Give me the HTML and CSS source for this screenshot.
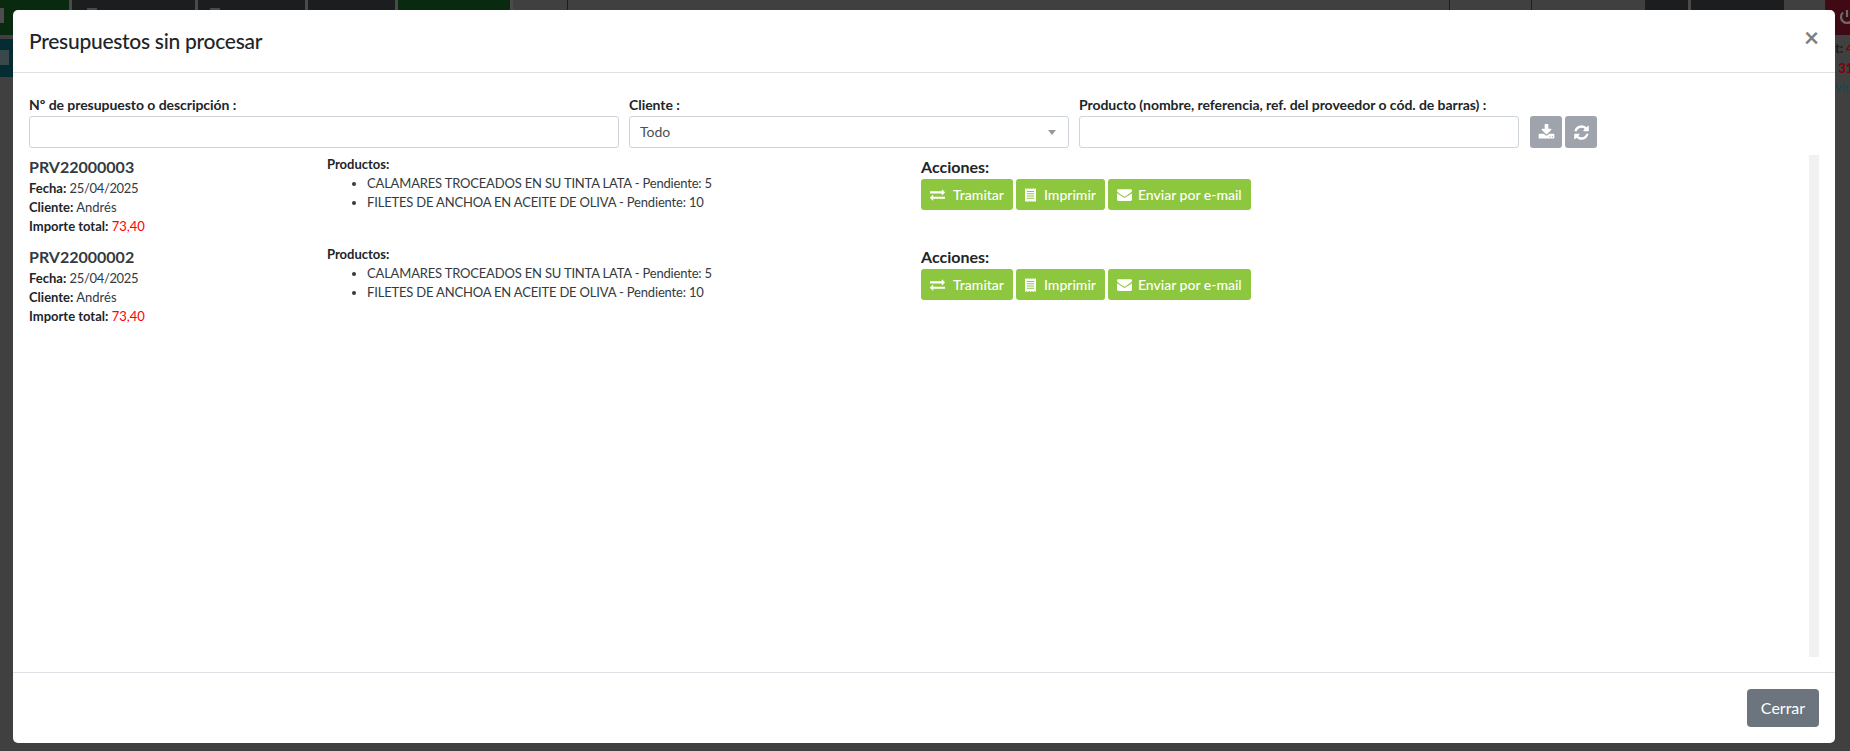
FILE: index.html
```html
<!DOCTYPE html>
<html lang="es">
<head>
<meta charset="utf-8">
<title>Presupuestos sin procesar</title>
<link rel="stylesheet" href="styles.css">
</head>
<body>
<svg class="sprite" xmlns="http://www.w3.org/2000/svg" aria-hidden="true">
  <symbol id="i-exchange" viewBox="0 0 1792 1792"><path d="M1792 1184v192q0 13-9.500 22.500t-22.500 9.500h-1376v192q0 13-9.500 22.500t-22.500 9.500q-12 0-24-10l-319-320q-9-9-9-22 0-14 9-23l320-320q9-9 23-9 13 0 22.500 9.500t9.500 22.500v192h1376q13 0 22.500 9.500t9.500 22.500zm0-544q0 14-9 23l-320 320q-9 9-23 9-13 0-22.500-9.500t-9.500-22.500v-192h-1376q-13 0-22.500-9.500t-9.500-22.500v-192q0-13 9.500-22.500t22.500-9.500h1376v-192q0-14 9-23t23-9q12 0 24 10l319 319q9 9 9 23z" fill="currentColor"/></symbol>
  <symbol id="i-receipt" viewBox="0 0 12 15"><path d="M0 0l1.500 1L3 0l1.500 1L6 0l1.500 1L9 0l1.500 1L12 0v15l-1.500-1L9 15l-1.500-1L6 15l-1.500-1L3 15l-1.500-1L0 15zM2 3.200v1.100h8V3.200zM2 5.600v1.100h8V5.600zM2 8v1.100h8V8zM2 10.400v1.100h8v-1.100z" fill="currentColor" fill-rule="evenodd"/></symbol>
  <symbol id="i-mail" viewBox="0 0 1792 1792"><path d="M1792 710v794q0 66-47 113t-113 47h-1472q-66 0-113-47t-47-113v-794q44 49 101 87 362 246 497 345 57 42 92.500 65.500t94.500 48 110 24.500h2q51 0 110-24.500t94.500-48 92.500-65.500q170-123 498-345 57-39 100-87zm0-294q0 79-49 151t-122 123q-376 261-468 325-10 7-42.500 30.500t-54 38-52 32.500-57.500 27-50 9h-2q-23 0-50-9t-57.500-27-52-32.500-54-38-42.500-30.500q-91-64-262-182.500t-205-142.500q-62-42-117-115.500t-55-136.500q0-78 41.500-130t118.500-52h1472q65 0 112.500 47t47.500 113z" fill="currentColor"/></symbol>
  <symbol id="i-download" viewBox="0 0 1792 1792"><path d="M1344 1344q0-26-19-45t-45-19-45 19-19 45 19 45 45 19 45-19 19-45zm256 0q0-26-19-45t-45-19-45 19-19 45 19 45 45 19 45-19 19-45zm128-224v320q0 40-28 68t-68 28h-1472q-40 0-68-28t-28-68v-320q0-40 28-68t68-28h465l135 136q58 56 136 56t136-56l136-136h464q40 0 68 28t28 68zm-325-569q17 41-14 70l-448 448q-18 19-45 19t-45-19l-448-448q-31-29-14-70 17-39 59-39h256v-448q0-26 19-45t45-19h256q26 0 45 19t19 45v448h256q42 0 59 39z" fill="currentColor"/></symbol>
  <symbol id="i-refresh" viewBox="0 0 1792 1792"><path d="M1639 1056q0 5-1 7-64 268-268 434.500t-478 166.500q-146 0-282.500-55t-243.500-157l-129 129q-19 19-45 19t-45-19-19-45v-448q0-26 19-45t45-19h448q26 0 45 19t19 45-19 45l-137 137q71 66 161 102t187 36q134 0 250-65t186-179q11-17 53-117 8-23 30-23h192q13 0 22.500 9.500t9.500 22.500zm25-800v448q0 26-19 45t-45 19h-448q-26 0-45-19t-19-45 19-45l138-138q-148-137-349-137-134 0-250 65t-186 179q-11 17-53 117-8 23-30 23h-199q-13 0-22.500-9.500t-9.500-22.500v-7q65-268 270-434.500t480-166.500q146 0 284 55.500t245 156.500l130-129q19-19 45-19t45 19 19 45z" fill="currentColor"/></symbol>
  <symbol id="i-power" viewBox="0 0 16 16"><path d="M8 1v7M4 3.500a6 6 0 1 0 8 0" fill="none" stroke="currentColor" stroke-width="2.200"/></symbol>
</svg>
<div class="behind">
  <div class="topbar">
    <div class="seg seg-green w-70"><i class="mark-left"></i></div>
    <div class="seg seg-dark w-123"><i class="mark mark-a"></i></div>
    <div class="seg seg-dark w-107"><i class="mark mark-b"></i></div>
    <div class="seg seg-dark w-87"></div>
    <div class="seg seg-green w-112"></div>
    <div class="seg seg-gray w-54 line"></div>
    <div class="seg seg-gray w-882 line"></div>
    <div class="seg seg-gray w-80 line"></div>
    <div class="seg seg-gray w-113 line"></div>
    <div class="seg seg-dark w-42"></div>
    <div class="seg seg-dark w-93"></div>
    <div class="seg seg-gray w-flex line"></div>
    <div class="seg seg-red w-23"><svg class="power"><use href="#i-power"/></svg></div>
  </div>
  <div class="under">
    <div class="teal"><i class="mark-teal"></i></div>
    <div class="side">
      <div class="side-line">t: <span class="side-red">4</span></div>
      <div class="side-line side-red">&nbsp;31</div>
      <div class="side-line side-teal">vid</div>
    </div>
  </div>
</div>

<div class="modal">
  <header class="modal-head">
    <h1 class="modal-title">Presupuestos sin procesar</h1>
    <button class="close" type="button" aria-label="Cerrar">×</button>
  </header>
  <div class="modal-body">
    <form class="filters">
      <div class="field field-a">
        <label class="label" for="q">Nº de presupuesto o descripción :</label>
        <input class="control" id="q" type="text">
      </div>
      <div class="field field-b">
        <label class="label" for="c">Cliente :</label>
        <div class="control select" id="c">Todo<span class="caret"></span></div>
      </div>
      <div class="field field-b">
        <label class="label" for="p">Producto (nombre, referencia, ref. del proveedor o cód. de barras) :</label>
        <input class="control" id="p" type="text">
      </div>
      <div class="tools">
        <button class="tool" type="button"><svg class="tool-icon"><use href="#i-download"/></svg></button>
        <button class="tool" type="button"><svg class="tool-icon"><use href="#i-refresh"/></svg></button>
      </div>
    </form>
    <div class="results">
      <div class="list">
        <article class="row">
          <div class="col-info">
            <h2 class="code">PRV22000003</h2>
            <div class="meta"><b>Fecha:</b> <span class="date">25/04/2025</span></div>
            <div class="meta"><b>Cliente:</b> Andrés</div>
            <div class="meta"><b>Importe total:</b> <span class="amount">73,40</span></div>
          </div>
          <div class="col-products">
            <div class="prod-title">Productos:</div>
            <ul class="prod-list">
              <li>CALAMARES TROCEADOS EN SU TINTA LATA - Pendiente: 5</li>
              <li>FILETES DE ANCHOA EN ACEITE DE OLIVA - Pendiente: 10</li>
            </ul>
          </div>
          <div class="col-actions">
            <h3 class="act-title">Acciones:</h3>
            <div class="act-btns">
              <button class="btn" type="button"><svg class="ic ic-ex"><use href="#i-exchange"/></svg>Tramitar</button>
              <button class="btn" type="button"><svg class="ic ic-re"><use href="#i-receipt"/></svg>Imprimir</button>
              <button class="btn" type="button"><svg class="ic ic-ma"><use href="#i-mail"/></svg>Enviar por e-mail</button>
            </div>
          </div>
        </article>
        <article class="row">
          <div class="col-info">
            <h2 class="code">PRV22000002</h2>
            <div class="meta"><b>Fecha:</b> <span class="date">25/04/2025</span></div>
            <div class="meta"><b>Cliente:</b> Andrés</div>
            <div class="meta"><b>Importe total:</b> <span class="amount">73,40</span></div>
          </div>
          <div class="col-products">
            <div class="prod-title">Productos:</div>
            <ul class="prod-list">
              <li>CALAMARES TROCEADOS EN SU TINTA LATA - Pendiente: 5</li>
              <li>FILETES DE ANCHOA EN ACEITE DE OLIVA - Pendiente: 10</li>
            </ul>
          </div>
          <div class="col-actions">
            <h3 class="act-title">Acciones:</h3>
            <div class="act-btns">
              <button class="btn" type="button"><svg class="ic ic-ex"><use href="#i-exchange"/></svg>Tramitar</button>
              <button class="btn" type="button"><svg class="ic ic-re"><use href="#i-receipt"/></svg>Imprimir</button>
              <button class="btn" type="button"><svg class="ic ic-ma"><use href="#i-mail"/></svg>Enviar por e-mail</button>
            </div>
          </div>
        </article>
      </div>
      <div class="scrolltrack"></div>
    </div>
  </div>
  <footer class="modal-foot">
    <button class="btn-close" type="button">Cerrar</button>
  </footer>
</div>
</body>
</html>
```
FILE: styles.css
```css
* { box-sizing: border-box; }
html, body { margin: 0; height: 751px; overflow: hidden; }
body {
  position: relative;
  background: #404040;
  font-family: Lato, "Open Sans", sans-serif;
  color: #212529;
  font-size: 13px;
  line-height: 19px;
}
.sprite { display: none; }

/* page dimmed behind the dialog */
.behind { height: 751px; overflow: hidden; }
.topbar { display: flex; height: 35px; }
.seg { height: 35px; position: relative; border-right: 3px solid #4a4a4a; flex: none; }
.seg.line { border-right: 1px solid #1c1d1f; }
.seg-green { background: #0a2a10; }
.seg-dark { background: #1c1d1f; }
.seg-gray { background: #404040; }
.seg-red { background: #3f0a14; border-right: 0; color: #6b6b6b; }
.w-70 { width: 72px; }
.w-123 { width: 126px; }
.w-107 { width: 110px; }
.w-87 { width: 90px; }
.w-112 { width: 115px; }
.w-54 { width: 55px; }
.w-882 { width: 882px; }
.w-80 { width: 82px; }
.w-113 { width: 114px; }
.w-42 { width: 45px; }
.w-93 { width: 93px; border-right: 0; }
.w-flex { width: 42px; }
.w-23 { flex: 1; }
.mark { position: absolute; top: 8px; width: 10px; height: 6px; background: #4a4a4a; }
.mark-a { left: 15px; }
.mark-b { left: 12px; }
.mark-left { position: absolute; left: 0; top: 8px; width: 4px; height: 15px; background: #4d4d4d; }
.power { position: absolute; left: 13px; top: 9px; width: 16px; height: 16px; }
.under { display: flex; justify-content: space-between; padding-top: 4px; }
.teal { width: 13px; height: 38px; background: #032c33; position: relative; }
.mark-teal { position: absolute; left: 0; top: 11px; width: 9px; height: 15px; background: #3a484c; }
.side { width: 15px; font-size: 13px; font-weight: 700; line-height: 19.500px; white-space: nowrap; overflow: hidden; color: #1c1d1f; }
.side-line { height: 19.500px; }
.side-red { color: #800000; }
.side-teal { color: #0f4a55; font-weight: 400; }

/* dialog */
.modal {
  position: absolute;
  left: 13px; top: 10px;
  width: 1822px; height: 733px;
  background: #fff;
  border-radius: 5px;
  display: flex;
  flex-direction: column;
}
.modal-head {
  height: 63px;
  flex: none;
  display: flex;
  justify-content: space-between;
  align-items: flex-start;
  border-bottom: 1px solid #dee2e6;
  padding: 16px;
}
.modal-title { margin: 0; font-size: 21px; line-height: 30px; font-weight: 500; letter-spacing: -0.28px; color: #212529; }
.close {
  border: 0; background: none; padding: 0;
  font: 700 26px/24px Lato, sans-serif;
  color: #7f7f7f;
  margin: -1px -1px 0 0;
  width: 17px;
}
.modal-body { flex: 1; padding: 21px 16px 0; display: flex; flex-direction: column; min-height: 0; }
.filters { display: flex; align-items: flex-end; gap: 10px; flex: none; }
.field { display: flex; flex-direction: column; flex: none; }
.field-a { width: 590px; }
.field-b { width: 440px; }
.label { font-size: 14px; font-weight: 700; line-height: 21px; margin-bottom: 1px; white-space: nowrap; color: #212529; letter-spacing: -0.05px; }
.control {
  display: block;
  width: 100%;
  height: 32px;
  border: 1px solid #ced4da;
  border-radius: 3px;
  background: #fff;
  font: 14px/30px Lato, sans-serif;
}
.select { padding-left: 10px; color: #495057; position: relative; }
.caret {
  position: absolute; right: 12px; top: 13px;
  border: 4px solid transparent; border-top: 5px solid #999; border-bottom: 0;
}
.tools { display: flex; gap: 3px; margin-left: 1px; }
.tool {
  width: 32px; height: 32px; border: 0; padding: 0;
  border-radius: 3px;
  background: #9fa4ac; color: #fff;
  display: flex; align-items: center; justify-content: center;
}
.tool-icon { width: 17px; height: 17px; }

.results { flex: 1; min-height: 0; display: flex; margin-top: 7px; }
.list { flex: 1; }
.scrolltrack { width: 10px; height: 502px; background: #f1f1f1; flex: none; }
.row { display: flex; height: 90px; }
.col-info { width: 298px; flex: none; }
.code { margin: 0; font-size: 16px; line-height: 24px; font-weight: 700; color: #343a40; }
.meta { height: 19px; color: #343a40; }
.meta b { font-weight: 700; color: #212529; }
.date { letter-spacing: -0.35px; }
.amount { color: #ff0000; }
.col-products { width: 594px; flex: none; }
.prod-title { font-weight: 700; color: #212529; }
.prod-list { margin: 0; padding: 0 0 0 40px; color: #343a40; letter-spacing: -0.18px; }
.col-actions { flex: 1; }
.act-title { margin: 0; font-size: 16px; line-height: 24px; font-weight: 700; color: #212529; }
.act-btns { display: flex; gap: 3px; }
.btn {
  height: 31px;
  border: 0;
  border-radius: 3px;
  background: #8dc63f;
  color: #fff;
  font: 500 14px/31px Lato, sans-serif;
  padding: 0 9px;
  display: flex;
  align-items: center;
}
.ic { flex: none; }
.ic-ex { width: 15px; height: 15px; margin-right: 8px; }
.ic-re { width: 11px; height: 14px; margin-right: 8px; }
.ic-ma { width: 15px; height: 15px; margin-right: 6px; }

.modal-foot {
  height: 71px;
  flex: none;
  border-top: 1px solid #dee2e6;
  display: flex;
  justify-content: flex-end;
  align-items: flex-start;
  padding: 16px;
}
.btn-close {
  width: 72px; height: 38px;
  border: 0; border-radius: 4px;
  background: #6c757d; color: #fff;
  font: 400 16px/24px Lato, sans-serif;
}
```
